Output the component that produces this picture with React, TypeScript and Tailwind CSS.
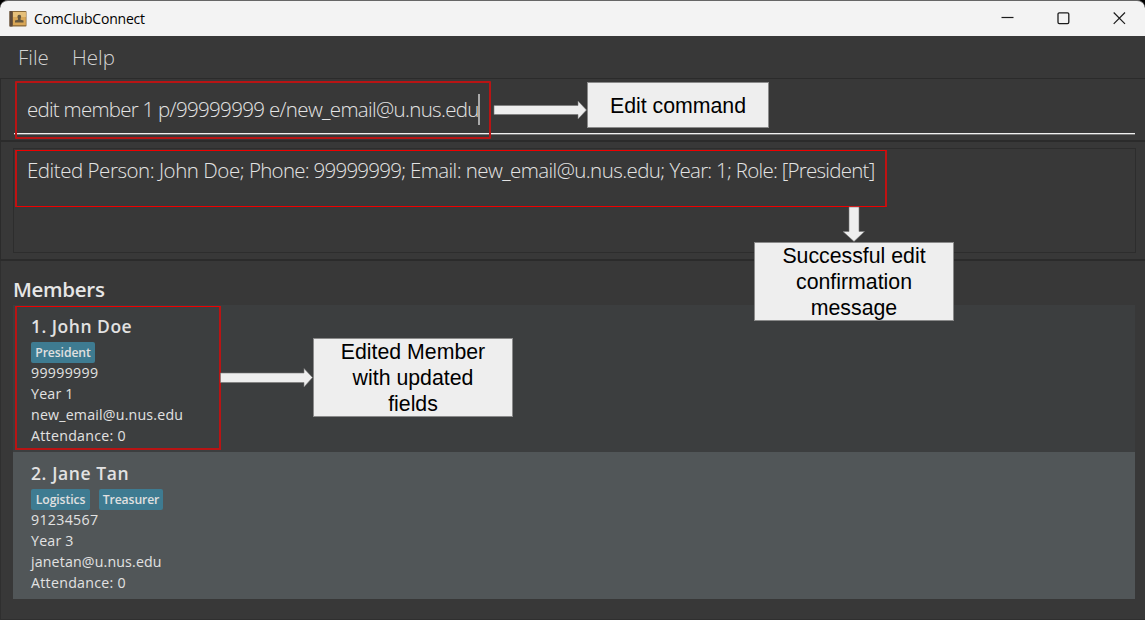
import React from "react";

type Member = {
  name: string;
  nameClass: string;
  tags: { label: string; width: string }[];
  lines: { text: string; tracking: string }[];
  background: string;
};

const members: Member[] = [
  {
    name: "1. John Doe",
    nameClass: "tracking-[0.5px]",
    tags: [{ label: "President", width: "w-16" }],
    lines: [
      { text: "99999999", tracking: "tracking-[0.3px]" },
      { text: "Year 1", tracking: "tracking-[0.2px]" },
      { text: "new_email@u.nus.edu", tracking: "tracking-[0.2px]" },
      { text: "Attendance: 0", tracking: "tracking-[0.28px]" },
    ],
    background: "bg-[#3c3e3f]",
  },
  {
    name: "2. Jane Tan",
    nameClass: "tracking-[0.6px]",
    tags: [
      { label: "Logistics", width: "w-[59px]" },
      { label: "Treasurer", width: "w-16" },
    ],
    lines: [
      { text: "91234567", tracking: "tracking-[0.3px]" },
      { text: "Year 3", tracking: "tracking-[0.2px]" },
      { text: "janetan@u.nus.edu", tracking: "tracking-[0.15px]" },
      { text: "Attendance: 0", tracking: "tracking-[0.28px]" },
    ],
    background: "bg-[#515658]",
  },
];

function AppIcon() {
  return (
    <svg width="18" height="18" viewBox="0 0 18 18" className="shrink-0">
      <rect x="0.5" y="1" width="17" height="15.5" rx="0.8" fill="#8a6a3a" />
      <rect x="0.5" y="1" width="3" height="15.5" fill="#5d4a3c" />
      <rect x="4" y="2" width="12.8" height="13.2" fill="#d9a757" />
      <rect x="4" y="2" width="12.800" height="5" fill="#e6c07a" />
      <path d="M9 8.800C8 7 8.300 4.800 10.300 4.800S12.600 7 11.600 8.800V9.800L14.500 10.600V12.500H6V10.600L9 9.800Z" fill="#66583f" />
    </svg>
  );
}

function TitleBar() {
  return (
    <header className="flex h-9 shrink-0 items-center rounded-t-lg border-t border-[#666] bg-[#f3f3f3] pl-[9px] text-black">
      <AppIcon />
      <span className="ml-[7px] text-[14px] leading-5 tracking-[-0.2px]">ComClubConnect</span>
      <div className="mr-[19px] ml-auto flex items-center gap-[43px]">
        <svg width="13" height="13" viewBox="0 0 13 13" fill="none" stroke="#1c1c1c" strokeWidth="1.2">
          <path d="M0.5 5.500H12.5" />
        </svg>
        <svg width="13" height="13" viewBox="0 0 13 13" fill="none" stroke="#1c1c1c" strokeWidth="1.3">
          <rect x="1" y="0.800" width="10.800" height="10.800" rx="1.3" />
        </svg>
        <svg width="13" height="13" viewBox="0 0 13 13" fill="none" stroke="#1c1c1c" strokeWidth="1.2">
          <path d="M0.7 0.5L12 11.800M12 0.5L0.7 11.800" />
        </svg>
      </div>
    </header>
  );
}

function MemberCard({ member }: { member: Member }) {
  return (
    <li className={`h-[147px] pt-2 pl-[18px] text-[#e2e2e2] ${member.background}`}>
      <h3 className={`h-[29px] text-[17.5px] leading-[27px] font-semibold ${member.nameClass}`}>{member.name}</h3>
      <div className="flex h-5 gap-[9px]">
        {member.tags.map((tag) => (
          <span
            key={tag.label}
            className={`flex h-[21px] items-center justify-center rounded-[2px] bg-[#3e7b91] pt-px text-[12.2px] font-semibold tracking-[-0.1px] whitespace-nowrap text-[#e0e0e0] ${tag.width}`}
          >
            {tag.label}
          </span>
        ))}
      </div>
      {member.lines.map((line) => (
        <p key={line.text} className={`w-fit text-[14.2px] leading-[21px] ${line.tracking}`}>
          {line.text}
        </p>
      ))}
    </li>
  );
}

function Callout({ className, children }: { className: string; children: React.ReactNode }) {
  return (
    <div
      className={`absolute flex flex-col items-center justify-center border border-[#8a8a8a] bg-[#eee] text-center font-['Liberation_Sans',Arial,sans-serif] text-[21.3px] leading-[26px] whitespace-nowrap text-black ${className}`}
    >
      {children}
    </div>
  );
}

function Annotations() {
  return (
    <div className="pointer-events-none absolute inset-0">
      <div className="absolute top-[81px] left-[15px] h-[58px] w-[476px] rounded-[1px] border-2 border-[#b81414]" />
      <div className="absolute top-[150px] left-[15px] h-[57px] w-[872px] border-x-2 border-y border-x-[#c01212] border-y-[#f00000]" />
      <div className="absolute top-[306px] left-[15px] h-[144px] w-[206px] border-x-2 border-t border-b-2 border-x-[#b81414] border-t-[#f00000] border-b-[#b81414]" />
      <svg className="absolute inset-0" width="1145" height="620" fill="#eee" stroke="#777" strokeWidth="0.6">
        <path d="M494 105.5H578V101L586.5 110L578 119V114.5H494Z" />
        <path d="M849 207H859V231.500H864.500L854 241.500L843 231.500H849Z" />
        <path d="M220.500 373H304V368.500L312.500 377.500L304 387V382.500H220.500Z" />
      </svg>
      <Callout className="top-[82px] left-[587px] h-[46px] w-[182px] pt-0.5">Edit command</Callout>
      <Callout className="top-[242px] left-[754px] h-[79px] w-[200px]">
        <span>Successful edit</span>
        <span>confirmation</span>
        <span>message</span>
      </Callout>
      <Callout className="top-[338px] left-[313px] h-[79px] w-[200px]">
        <span>Edited Member</span>
        <span>with updated</span>
        <span>fields</span>
      </Callout>
    </div>
  );
}

export default function App() {
  return (
    <div className="relative flex h-[620px] w-[1145px] flex-col overflow-hidden bg-black font-['Open_Sans','Noto_Sans',sans-serif]">
      <TitleBar />
      <div className="flex flex-1 flex-col bg-[#383838]">
        <nav className="flex h-[42px] items-center pl-[18px] text-[20.5px] font-light text-[#d4d4d4]">
          <span className="w-[54px]">File</span>
          <span>Help</span>
        </nav>
        <section className="h-16 border-t border-b-2 border-l border-[#2b2b2b] pl-[13px]">
          <div className="mr-[10px] flex h-[55px] items-center border-b border-[#f0f0f0] pt-[6px] pl-[13px] text-[20.5px] font-light text-[#e4e4e4] shadow-[0_1px_0_#777]">
            <span className="whitespace-pre">
              <span className="tracking-[-0.75px]">edit member 1 </span>
              <span className="tracking-[-0.66px]">p/99999999 </span>
              <span className="tracking-[-0.66px]">e/new_email@u.nus.edu</span>
            </span>
            <span className="-ml-px h-[31px] w-0.5 bg-[#aaa]" />
          </div>
        </section>
        <section className="h-[119px] border-b-2 border-l border-[#2b2b2b] pt-[6px] pr-[9px] pl-3">
          <div className="h-[105px] border border-[#2d2d2d] pt-[6px] pl-[13px] text-[20.5px] leading-[30px] font-light text-[#e4e4e4]">
            <span className="whitespace-pre">
              <span className="tracking-[-0.46px]">Edited Person: John Doe; </span>
              <span className="tracking-[-0.74px]">Phone: 99999999; </span>
              <span className="tracking-[-0.57px]">Email: new_email@u.nus.edu; </span>
              <span className="tracking-[-0.74px]">Year: 1; Role: [President]</span>
            </span>
          </div>
        </section>
        <main className="flex-1 border-b border-l border-[#2f2f2f] pr-[10px] pl-3">
          <h2 className="mt-[13px] h-[31px] text-[20.5px] leading-[30px] font-semibold text-[#e6e6e6]">
            <span className="tracking-[-0.3px]">Members</span>
          </h2>
          <ul>
            {members.map((member) => (
              <MemberCard key={member.name} member={member} />
            ))}
          </ul>
        </main>
      </div>
      <Annotations />
    </div>
  );
}
